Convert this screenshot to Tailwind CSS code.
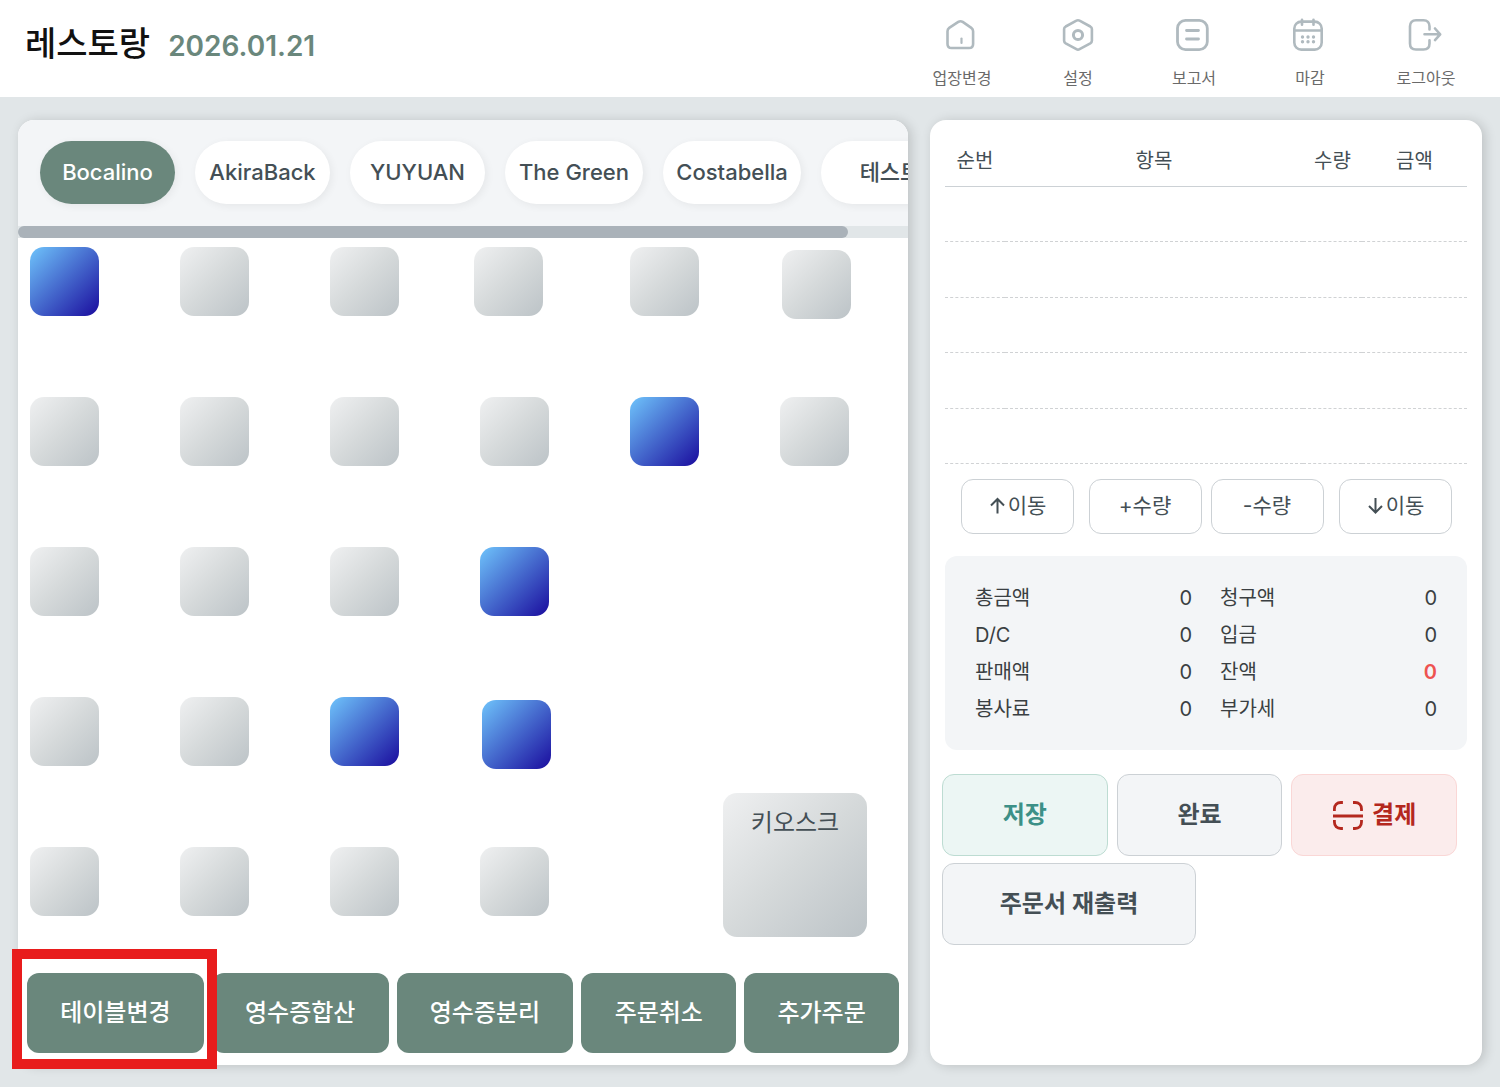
<!DOCTYPE html>
<html lang="ko">
<head>
<meta charset="utf-8">
<meta name="viewport" content="width=device-width, initial-scale=1">
<title>레스토랑</title>
<script src="https://cdn.jsdelivr.net/npm/@tailwindcss/browser@4"></script>
</head>
<body class="flex min-h-screen flex-col bg-[#e1e6e8] font-['Inter','Noto_Sans_CJK_KR',sans-serif] text-[#444f55]">

<header class="flex h-[97px] shrink-0 items-start justify-between bg-white pr-4 pl-[25px]">
  <div class="flex items-baseline gap-[18px] pt-[18px]">
    <h1 class="text-[34px] leading-[52px] font-medium text-[#111]">레스토랑</h1>
    <span class="text-[28px] font-semibold text-[#6a877c]">2026.01.21</span>
  </div>
  <nav class="flex text-base leading-6 font-normal text-[#6a6a6a]">
    <a href="#" class="flex w-[116px] flex-col items-center gap-[13px] pt-[17px]">
      <svg class="size-9 text-[#b0babf]" viewBox="0 0 36 36" fill="none" stroke="currentColor" stroke-width="2.600" stroke-linecap="round" stroke-linejoin="round"><path d="M3.500 14.300c0-1.400.6-2.600 1.700-3.400L14.300 4.900c1.400-.9 3-.9 4.400 0l8.600 6c1.200.8 1.800 2 1.800 3.400v12.600c0 2.500-1.600 4.100-4.100 4.100H7.600c-2.500 0-4.100-1.600-4.100-4.100z"/><path d="M17.500 21.500v4.500" stroke-width="2.200"/></svg>
      <span>업장변경</span>
    </a>
    <a href="#" class="flex w-[116px] flex-col items-center gap-[13px] pt-[17px]">
      <svg class="size-9 text-[#b0babf]" viewBox="0 0 36 36" fill="none" stroke="currentColor" stroke-width="2.600" stroke-linejoin="round"><path d="M16.400 3.700a3 3 0 0 1 3.200 0l10.700 5.800c1 .6 1.600 1.500 1.600 2.600v11.600c0 1.100-.6 2-1.600 2.600l-10.700 5.900a3 3 0 0 1-3.200 0L5.700 26.300c-1-.6-1.600-1.500-1.600-2.600V12.100c0-1.100.6-2 1.600-2.600z"/><circle cx="18" cy="18" r="4.600" stroke-width="3"/></svg>
      <span>설정</span>
    </a>
    <a href="#" class="flex w-[116px] flex-col items-center gap-[13px] pt-[17px]">
      <svg class="size-9 text-[#b0babf]" viewBox="0 0 36 36" fill="none" stroke="currentColor" stroke-width="2.800" stroke-linecap="round"><rect x="1.500" y="3.300" width="29.800" height="29.400" rx="8"/><path d="M10.500 13.500h12M10.500 22h12"/></svg>
      <span>보고서</span>
    </a>
    <a href="#" class="flex w-[116px] flex-col items-center gap-[13px] pt-[17px]">
      <svg class="size-9 text-[#b0babf]" viewBox="0 0 36 36" fill="none" stroke="currentColor" stroke-width="2.600" stroke-linecap="round"><rect x="2.300" y="4.600" width="27.400" height="28" rx="7"/><path d="M2.500 13.500h27M10 2.800v5M21.500 2.800v5"/><path d="M10.500 20h.01M16 20h.01M21.500 20h.01M10.500 24.800h.01M16 24.800h.01M21.500 24.800h.01" stroke-width="3.400"/></svg>
      <span>마감</span>
    </a>
    <a href="#" class="flex w-[116px] flex-col items-center gap-[13px] pt-[17px]">
      <svg class="size-9 text-[#b0babf]" viewBox="0 0 36 36" fill="none" stroke="currentColor" stroke-width="2.600" stroke-linecap="round" stroke-linejoin="round"><path d="M21.500 12.500v-3.200c0-3.800-2.200-6-6-6H8c-3.800 0-6 2.200-6 6v17.200c0 3.800 2.200 6 6 6h7.500c3.800 0 6-2.200 6-6v-3.300"/><path d="M16.500 17.300H32M27 11.500l5.200 5.800-5.200 5.800"/></svg>
      <span>로그아웃</span>
    </a>
  </nav>
</header>

<main class="grid flex-1 grid-cols-[890fr_552fr] gap-[22px] pt-[23px] pr-[18px] pb-[22px] pl-[18px]">

  <!-- Floor plan -->
  <section class="flex min-w-0 flex-col rounded-2xl bg-white shadow-[3px_1px_12px_rgba(0,0,0,0.16)]">
    <div class="overflow-hidden rounded-t-2xl bg-[#f3f5f7]">
      <div class="flex h-[106px] gap-5 overflow-hidden pt-[21px] pl-[22px] text-[22px] font-medium whitespace-nowrap">
        <button class="h-[63px] w-[135px] shrink-0 rounded-full bg-[#6a877c] text-white shadow-[2px_2px_8px_rgba(0,0,0,0.06)]">Bocalino</button>
        <button class="h-[63px] w-[135px] shrink-0 rounded-full bg-white shadow-[2px_2px_8px_rgba(0,0,0,0.06)]">AkiraBack</button>
        <button class="h-[63px] w-[135px] shrink-0 rounded-full bg-white shadow-[2px_2px_8px_rgba(0,0,0,0.06)]">YUYUAN</button>
        <button class="h-[63px] w-[138px] shrink-0 rounded-full bg-white shadow-[2px_2px_8px_rgba(0,0,0,0.06)]">The Green</button>
        <button class="h-[63px] w-[138px] shrink-0 rounded-full bg-white shadow-[2px_2px_8px_rgba(0,0,0,0.06)]">Costabella</button>
        <button class="h-[63px] w-[138px] shrink-0 rounded-full bg-white shadow-[2px_2px_8px_rgba(0,0,0,0.06)]">테스트</button>
      </div>
      <div class="h-3 bg-[#e1e6e8]"><div class="h-3 w-[830px] rounded-full bg-[#aab2b9]"></div></div>
    </div>

    <div class="relative min-h-[710px] flex-1">
      <button aria-label="테이블" class="absolute top-[9px] left-[12px] size-[69px] rounded-[14px] bg-linear-135/srgb from-[#6fc4fb] to-[#1a0c9e]"></button>
      <button aria-label="테이블" class="absolute top-[9px] left-[162px] size-[69px] rounded-[14px] bg-linear-135/srgb from-[#eff0f1] via-[#d5d9da] to-[#bcc3c7]"></button>
      <button aria-label="테이블" class="absolute top-[9px] left-[312px] size-[69px] rounded-[14px] bg-linear-135/srgb from-[#eff0f1] via-[#d5d9da] to-[#bcc3c7]"></button>
      <button aria-label="테이블" class="absolute top-[9px] left-[456px] size-[69px] rounded-[14px] bg-linear-135/srgb from-[#eff0f1] via-[#d5d9da] to-[#bcc3c7]"></button>
      <button aria-label="테이블" class="absolute top-[9px] left-[612px] size-[69px] rounded-[14px] bg-linear-135/srgb from-[#eff0f1] via-[#d5d9da] to-[#bcc3c7]"></button>
      <button aria-label="테이블" class="absolute top-[12px] left-[764px] size-[69px] rounded-[14px] bg-linear-135/srgb from-[#eff0f1] via-[#d5d9da] to-[#bcc3c7]"></button>

      <button aria-label="테이블" class="absolute top-[159px] left-[12px] size-[69px] rounded-[14px] bg-linear-135/srgb from-[#eff0f1] via-[#d5d9da] to-[#bcc3c7]"></button>
      <button aria-label="테이블" class="absolute top-[159px] left-[162px] size-[69px] rounded-[14px] bg-linear-135/srgb from-[#eff0f1] via-[#d5d9da] to-[#bcc3c7]"></button>
      <button aria-label="테이블" class="absolute top-[159px] left-[312px] size-[69px] rounded-[14px] bg-linear-135/srgb from-[#eff0f1] via-[#d5d9da] to-[#bcc3c7]"></button>
      <button aria-label="테이블" class="absolute top-[159px] left-[462px] size-[69px] rounded-[14px] bg-linear-135/srgb from-[#eff0f1] via-[#d5d9da] to-[#bcc3c7]"></button>
      <button aria-label="테이블" class="absolute top-[159px] left-[612px] size-[69px] rounded-[14px] bg-linear-135/srgb from-[#6fc4fb] to-[#1a0c9e]"></button>
      <button aria-label="테이블" class="absolute top-[159px] left-[762px] size-[69px] rounded-[14px] bg-linear-135/srgb from-[#eff0f1] via-[#d5d9da] to-[#bcc3c7]"></button>

      <button aria-label="테이블" class="absolute top-[309px] left-[12px] size-[69px] rounded-[14px] bg-linear-135/srgb from-[#eff0f1] via-[#d5d9da] to-[#bcc3c7]"></button>
      <button aria-label="테이블" class="absolute top-[309px] left-[162px] size-[69px] rounded-[14px] bg-linear-135/srgb from-[#eff0f1] via-[#d5d9da] to-[#bcc3c7]"></button>
      <button aria-label="테이블" class="absolute top-[309px] left-[312px] size-[69px] rounded-[14px] bg-linear-135/srgb from-[#eff0f1] via-[#d5d9da] to-[#bcc3c7]"></button>
      <button aria-label="테이블" class="absolute top-[309px] left-[462px] size-[69px] rounded-[14px] bg-linear-135/srgb from-[#6fc4fb] to-[#1a0c9e]"></button>

      <button aria-label="테이블" class="absolute top-[459px] left-[12px] size-[69px] rounded-[14px] bg-linear-135/srgb from-[#eff0f1] via-[#d5d9da] to-[#bcc3c7]"></button>
      <button aria-label="테이블" class="absolute top-[459px] left-[162px] size-[69px] rounded-[14px] bg-linear-135/srgb from-[#eff0f1] via-[#d5d9da] to-[#bcc3c7]"></button>
      <button aria-label="테이블" class="absolute top-[459px] left-[312px] size-[69px] rounded-[14px] bg-linear-135/srgb from-[#6fc4fb] to-[#1a0c9e]"></button>
      <button aria-label="테이블" class="absolute top-[462px] left-[464px] size-[69px] rounded-[14px] bg-linear-135/srgb from-[#6fc4fb] to-[#1a0c9e]"></button>

      <button aria-label="테이블" class="absolute top-[609px] left-[12px] size-[69px] rounded-[14px] bg-linear-135/srgb from-[#eff0f1] via-[#d5d9da] to-[#bcc3c7]"></button>
      <button aria-label="테이블" class="absolute top-[609px] left-[162px] size-[69px] rounded-[14px] bg-linear-135/srgb from-[#eff0f1] via-[#d5d9da] to-[#bcc3c7]"></button>
      <button aria-label="테이블" class="absolute top-[609px] left-[312px] size-[69px] rounded-[14px] bg-linear-135/srgb from-[#eff0f1] via-[#d5d9da] to-[#bcc3c7]"></button>
      <button aria-label="테이블" class="absolute top-[609px] left-[462px] size-[69px] rounded-[14px] bg-linear-135/srgb from-[#eff0f1] via-[#d5d9da] to-[#bcc3c7]"></button>
      <button class="absolute top-[555px] left-[705px] flex size-36 justify-center rounded-[14px] bg-linear-135/srgb from-[#eff0f1] via-[#d5d9da] to-[#bcc3c7] pt-3 text-2xl leading-9 font-normal">키오스크</button>
    </div>

    <div class="flex gap-2 px-[9px] pb-3 text-2xl font-medium whitespace-nowrap text-white">
      <div class="relative flex-[177]">
        <button class="h-20 w-full rounded-xl bg-[#6a877c]">테이블변경</button>
        <div class="pointer-events-none absolute -top-6 -right-[13px] -bottom-4 -left-[15px] z-10 border-[10px] border-[#e81c1c]"></div>
      </div>
      <button class="h-20 flex-[177] rounded-xl bg-[#6a877c]">영수증합산</button>
      <button class="h-20 flex-[177] rounded-xl bg-[#6a877c]">영수증분리</button>
      <button class="h-20 flex-[155] rounded-xl bg-[#6a877c]">주문취소</button>
      <button class="h-20 flex-[155] rounded-xl bg-[#6a877c]">추가주문</button>
    </div>
  </section>

  <!-- Order -->
  <section class="flex min-w-0 flex-col rounded-2xl bg-white px-[15px] pt-[14px] shadow-[3px_1px_12px_rgba(0,0,0,0.16)]">
    <table class="w-full table-fixed border-collapse text-xl">
      <colgroup><col class="w-[60px]"><col><col class="w-[59px]"><col class="w-[105px]"></colgroup>
      <thead>
        <tr class="h-[52px] border-b border-[#ccd1d5]">
          <th class="pt-[3px] font-normal">순번</th><th class="pt-[3px] font-normal">항목</th><th class="pt-[3px] font-normal">수량</th><th class="pt-[3px] font-normal">금액</th>
        </tr>
      </thead>
      <tbody>
        <tr class="h-[55px] border-b border-dashed border-[#d0d2d4]"><td></td><td></td><td></td><td></td></tr>
        <tr class="h-[56px] border-b border-dashed border-[#d0d2d4]"><td></td><td></td><td></td><td></td></tr>
        <tr class="h-[55px] border-b border-dashed border-[#d0d2d4]"><td></td><td></td><td></td><td></td></tr>
        <tr class="h-[56px] border-b border-dashed border-[#d0d2d4]"><td></td><td></td><td></td><td></td></tr>
        <tr class="h-[55px] border-b border-dashed border-[#d0d2d4]"><td></td><td></td><td></td><td></td></tr>
      </tbody>
    </table>

    <div class="mt-[15px] flex justify-center gap-[9px] text-[21px]">
      <div class="flex gap-[15px]">
        <button class="flex h-[55px] w-[113px] items-center justify-center gap-[2px] rounded-xl border border-[#ccd1d5]">
          <svg class="size-[18px]" viewBox="0 0 18 18" fill="none" stroke="currentColor" stroke-width="2"><path d="M9.500 16.500V2M3 8.500L9.500 2l6.500 6.500"/></svg>이동</button>
        <button class="h-[55px] w-[113px] rounded-xl border border-[#ccd1d5]">+수량</button>
      </div>
      <div class="flex gap-[15px]">
        <button class="h-[55px] w-[113px] rounded-xl border border-[#ccd1d5]">-수량</button>
        <button class="flex h-[55px] w-[113px] items-center justify-center gap-[2px] rounded-xl border border-[#ccd1d5]">
          <svg class="size-[18px]" viewBox="0 0 18 18" fill="none" stroke="currentColor" stroke-width="2"><path d="M9.500 1v14.500M3 9l6.500 6.500L16 9"/></svg>이동</button>
      </div>
    </div>

    <dl class="mt-[22px] grid grid-cols-2 gap-x-7 rounded-xl bg-[#f3f5f7] px-[30px] pt-6 pb-[22px] text-xl leading-[37px] text-[#3a3f42]">
      <div class="flex h-[37px] justify-between"><dt>총금액</dt><dd>0</dd></div>
      <div class="flex h-[37px] justify-between"><dt>청구액</dt><dd>0</dd></div>
      <div class="flex h-[37px] justify-between"><dt>D/C</dt><dd>0</dd></div>
      <div class="flex h-[37px] justify-between"><dt>입금</dt><dd>0</dd></div>
      <div class="flex h-[37px] justify-between"><dt>판매액</dt><dd>0</dd></div>
      <div class="flex h-[37px] justify-between"><dt>잔액</dt><dd class="font-semibold text-[#ee5350]">0</dd></div>
      <div class="flex h-[37px] justify-between"><dt>봉사료</dt><dd>0</dd></div>
      <div class="flex h-[37px] justify-between"><dt>부가세</dt><dd>0</dd></div>
    </dl>

    <div class="mt-6 mr-[10px] -ml-[3px] text-2xl font-semibold">
      <div class="grid grid-cols-3 gap-[9px]">
        <button class="h-[82px] rounded-xl border border-[#bddcd2] bg-[#ecf6f4] text-[#3c9087]">저장</button>
        <button class="h-[82px] rounded-xl border border-[#ccd1d5] bg-[#f3f5f7]">완료</button>
        <button class="flex h-[82px] items-center justify-center gap-2 rounded-xl border border-[#fad7d6] bg-[#fbecec] text-[#b4281e]">
          <svg class="size-8" viewBox="0 0 32 32" fill="none" stroke="currentColor" stroke-width="2.800"><path d="M2.400 12V10c0-4 2.500-6.500 6.500-6.500h2M21 3.500h2c4 0 6.500 2.500 6.500 6.500v2M29.500 21v2c0 4-2.500 6.500-6.500 6.500h-2M10.900 29.500h-2c-4 0-6.500-2.500-6.500-6.500v-2M1 17h30"/></svg>결제</button>
      </div>
      <button class="mt-[7px] h-[82px] w-[254px] rounded-xl border border-[#ccd1d5] bg-[#f3f5f7]">주문서 재출력</button>
    </div>
  </section>
</main>
</body>
</html>
